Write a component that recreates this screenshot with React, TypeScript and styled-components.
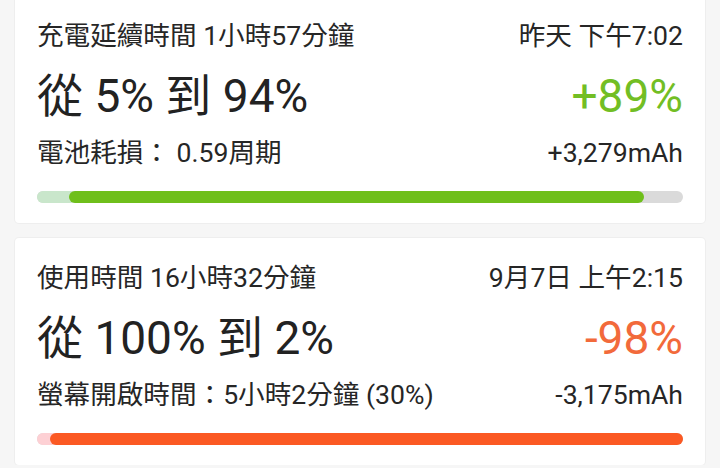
import React from 'react'
import styled, { createGlobalStyle } from 'styled-components'

const GlobalStyle = createGlobalStyle`
  html, body {
    margin: 0;
    padding: 0;
    background: #f6f6f6;
    font-family: Roboto, "Noto Sans CJK TC", sans-serif;
    overflow: hidden;
  }
`

type Session = {
  title: string
  time: string
  range: string
  delta: string
  detail: string
  mah: string
  start: number
  end: number
  tone: 'charge' | 'drain'
}

const sessions: Session[] = [
  {
    title: '充電延續時間 1小時57分鐘',
    time: '昨天 下午7:02',
    range: '從 5% 到 94%',
    delta: '+89%',
    detail: '電池耗損： 0.59周期',
    mah: '+3,279mAh',
    start: 5,
    end: 94,
    tone: 'charge',
  },
  {
    title: '使用時間 16小時32分鐘',
    time: '9月7日 上午2:15',
    range: '從 100% 到 2%',
    delta: '-98%',
    detail: '螢幕開啟時間：5小時2分鐘 (30%)',
    mah: '-3,175mAh',
    start: 2,
    end: 100,
    tone: 'drain',
  },
]

const palette = {
  charge: { text: '#72be24', bar: '#6fbf1b', light: '#c9e6cb' },
  drain: { text: '#f26a3b', bar: '#fb5923', light: '#fdd0d4' },
}

const List = styled.div`
  display: flex;
  flex-direction: column;
  gap: 15px;
  margin-top: -4px;
  padding: 0 15px;
`

const Card = styled.div`
  background: #fff;
  border-radius: 4px;
  box-shadow: 0 0 0 1px #eeeeee;
  padding: 24px 22px 20px;
`

const Row = styled.div`
  display: flex;
  justify-content: space-between;
  align-items: center;
`

const Small = styled.span`
  font-size: 26.6px;
  line-height: 32px;
  color: #262626;
  white-space: nowrap;
`

const BigRow = styled(Row)`
  margin-top: 16px;
`

const Big = styled.span<{ $color?: string }>`
  font-size: 46px;
  line-height: 56px;
  color: ${p => p.$color ?? '#222'};
  white-space: nowrap;
`

const DetailRow = styled(Row)`
  margin-top: 13px;
`

const Track = styled.div`
  position: relative;
  margin-top: 22px;
  height: 12px;
  border-radius: 6px;
  background: #dadada;
`

const Segment = styled.div<{ $color: string }>`
  position: absolute;
  top: 0;
  bottom: 0;
  border-radius: 6px;
  background: ${p => p.$color};
`

function SessionCard({ s }: { s: Session }) {
  const c = palette[s.tone]
  return (
    <Card>
      <Row>
        <Small>{s.title}</Small>
        <Small>{s.time}</Small>
      </Row>
      <BigRow>
        <Big>{s.range}</Big>
        <Big $color={c.text}>{s.delta}</Big>
      </BigRow>
      <DetailRow>
        <Small>{s.detail}</Small>
        <Small>{s.mah}</Small>
      </DetailRow>
      <Track>
        <Segment $color={c.light} style={{ left: 0, width: `calc(${s.start}% + 8px)` }} />
        <Segment $color={c.bar} style={{ left: `${s.start}%`, width: `${s.end - s.start}%` }} />
      </Track>
    </Card>
  )
}

export default function App() {
  return (
    <>
      <GlobalStyle />
      <List>
        {sessions.map(s => (
          <SessionCard key={s.title} s={s} />
        ))}
      </List>
    </>
  )
}
